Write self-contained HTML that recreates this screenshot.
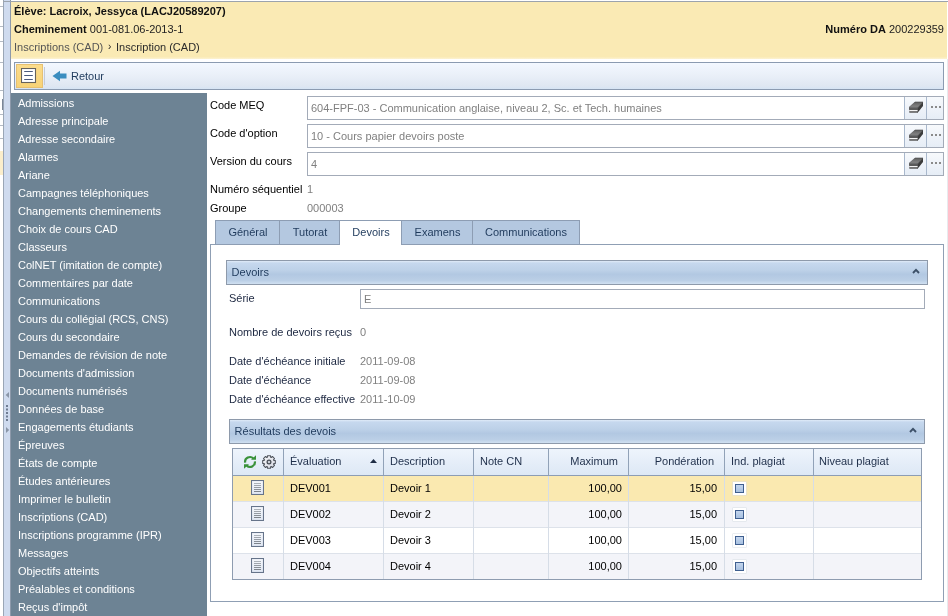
<!DOCTYPE html>
<html><head><meta charset="utf-8">
<style>
*{box-sizing:border-box;margin:0;padding:0}
html,body{width:948px;height:616px;overflow:hidden;background:#fff;font-family:"Liberation Sans",sans-serif;font-size:11px;color:#222}
.a{position:absolute}
.t{position:absolute;white-space:nowrap;line-height:18px;height:18px}
#strip{left:3px;top:0;width:8px;height:616px;background:#cfdbef;border-left:1px solid #9aa6b6;border-right:1px solid #8d99aa}
#topline{left:3px;top:1px;width:945px;height:1px;background:#9ba3ad}
#hdr{left:11px;top:2px;width:936px;height:57px;background:linear-gradient(#faeab4 0,#faeab4 96%,#fcf2d2 100%)}
#tb{left:14px;top:62px;width:930px;height:28px;border:1px solid #8b9bb1;background:linear-gradient(#f3f8ff,#e9eff8 50%,#dfe7f2 88%,#d6e4f4)}
#side{left:11px;top:93px;width:196px;height:523px;background:#6d8394}
#side .t{color:#fff;left:7px}
#main{left:207px;top:93px;width:739px;height:523px;background:#fff}
.lbl{color:#000}
.inp{position:absolute;height:24px;border:1px solid #a3abb8;background:#fff;color:#808080;line-height:22px;padding-left:3px;white-space:nowrap}
.btn{position:absolute;top:0;height:22px;border-left:1px solid #a9b8cc;background:linear-gradient(#f7f9fc,#e6edf6)}
.tab{position:absolute;top:220px;height:25px;border:1px solid #8d9db3;border-right:none;background:#b4c8e0;color:#1f3a5c;text-align:center;line-height:23px}
.hbar{position:absolute;white-space:nowrap;height:25px;border:1px solid #8e9aab;background:linear-gradient(#e0ebf8 0,#c6d8ee 9%,#bdd1e8 40%,#b2c8e2 58%,#bbcfe6 85%,#d0e0f1 100%);color:#1f3a5c;line-height:23px;padding-left:4.6px}
.val{color:#808080}
.dl{color:#1c2740}
.gh{color:#1f2f4a}
.gc{color:#000}
</style></head><body><div style="position:absolute;left:0;top:0;width:948px;height:616px;will-change:transform">
<div class="a" style="left:0;top:0;width:3px;height:616px;background:#fff"></div>
<div id="strip" class="a"></div>
<div id="topline" class="a"></div>
<div class="a" style="left:947px;top:59px;width:1px;height:557px;background:#e8eaee"></div>
<div class="a" style="left:0;top:6px;width:3px;height:1px;background:#b4bac4"></div><div class="a" style="left:0;top:26px;width:3px;height:1px;background:#b4bac4"></div><div class="a" style="left:0;top:41px;width:3px;height:1px;background:#b4bac4"></div><div class="a" style="left:0;top:62px;width:3px;height:1px;background:#b4bac4"></div><div class="a" style="left:0;top:90px;width:3px;height:1px;background:#b4bac4"></div><div class="a" style="left:0;top:114px;width:3px;height:1px;background:#b4bac4"></div><div class="a" style="left:0;top:125px;width:3px;height:1px;background:#b4bac4"></div><div class="a" style="left:0;top:138px;width:3px;height:1px;background:#b4bac4"></div><div class="a" style="left:2px;top:99px;width:1px;height:11px;background:#7a8698"></div>
<div class="a" style="left:0;top:151px;width:3px;height:24px;background:#fbeecb"></div>
<svg class="a" style="left:4px;top:391px" width="6" height="44" viewBox="0 0 6 44"><path d="M5 1 L1.6 4 L5 7Z" fill="#8a96a8"/><g fill="#6f7c92"><rect x="2" y="14" width="2" height="2"/><rect x="2" y="17.5" width="2" height="2"/><rect x="2" y="21" width="2" height="2"/><rect x="2" y="24.5" width="2" height="2"/><rect x="2" y="28" width="2" height="2"/></g><path d="M2 36 L5.2 39 L2 42Z" fill="#8a96a8"/></svg>

<div id="hdr" class="a">
  <div class="t" style="left:3px;top:0px;font-weight:bold;color:#111">Élève: Lacroix, Jessyca (LACJ20589207)</div>
  <div class="t" style="left:3px;top:18px;color:#222"><b style="color:#111">Cheminement</b> 001-081.06-2013-1</div>
  <div class="t" style="right:3px;top:18px;color:#222"><b style="color:#111">Numéro DA</b> 200229359</div>
  <div class="t" style="left:3px;top:36px;color:#555">Inscriptions (CAD)</div><div class="t" style="left:97px;top:36px;color:#222;font-size:10px">›</div><div class="t" style="left:105px;top:36px;color:#2a2a2a">Inscription (CAD)</div>
</div>

<div id="tb" class="a">
  <div class="a" style="left:1px;top:1px;width:27px;height:24px;background:linear-gradient(#fbdc8c,#f8d377);border:1px solid #e7c171"></div>
  <svg class="a" style="left:6px;top:5px" width="16" height="16" viewBox="0 0 16 16"><rect x="0.5" y="0.5" width="14" height="14" fill="#fff" stroke="#65625c" stroke-width="1.1"/><path d="M3.2 3.5h8.6M3.2 7.5h8.6M3.2 11.5h8.6" stroke="#4b5a7e" stroke-width="1.1"/></svg>
  <div class="a" style="left:29px;top:4px;width:1px;height:18px;background:#c3cad6"></div>
  <svg class="a" style="left:37px;top:6.5px" width="15" height="12" viewBox="0 0 15 12"><path d="M0.5 6 L8 0.8 V3.6 H14.5 V8.6 H8 V11.2 Z" fill="#3b8dbf"/></svg>
  <div class="t" style="left:56px;top:4px;color:#1f3a5c;line-height:18px">Retour</div>
</div>
<div class="t lbl" style="left:210px;top:96px">Code MEQ</div>
<div class="t lbl" style="left:210px;top:124px">Code d'option</div>
<div class="t lbl" style="left:210px;top:152px">Version du cours</div>
<div class="inp" style="left:307px;top:96px;width:637px">604-FPF-03 - Communication anglaise, niveau 2, Sc. et Tech. humaines<div class="btn" style="left:596px;width:22px"><svg class="a" style="left:3px;top:4px" width="16" height="13" viewBox="0 0 16 13"><defs><linearGradient id="eg" x1="0" y1="0" x2="0" y2="1"><stop offset="0" stop-color="#5e5e5e"/><stop offset="1" stop-color="#8a8a8a"/></linearGradient></defs><path d="M7 1 L15 1 L10 6.4 L1 6.4 Z" fill="url(#eg)" stroke="#4a4a4a" stroke-width="0.6" stroke-linejoin="round"/><path d="M1 6.4 L10 6.4 L10 11.8 L1.3 11.8 Z" fill="#5a5a5a"/><path d="M10 6.4 L15 1 L15 5 L9.6 11.8 L10 6.4Z" fill="#3c3c3c"/><path d="M1.2 9.6 H9.6" stroke="#f4f4f4" stroke-width="1.2"/></svg></div><div class="btn" style="left:618px;width:17px"><div class="a" style="left:4px;top:9px;width:2px;height:2px;background:#8a8a8a"></div><div class="a" style="left:8px;top:9px;width:2px;height:2px;background:#8a8a8a"></div><div class="a" style="left:12px;top:9px;width:2px;height:2px;background:#8a8a8a"></div></div></div>
<div class="inp" style="left:307px;top:124px;width:637px">10 - Cours papier devoirs poste<div class="btn" style="left:596px;width:22px"><svg class="a" style="left:3px;top:4px" width="16" height="13" viewBox="0 0 16 13"><defs><linearGradient id="eg" x1="0" y1="0" x2="0" y2="1"><stop offset="0" stop-color="#5e5e5e"/><stop offset="1" stop-color="#8a8a8a"/></linearGradient></defs><path d="M7 1 L15 1 L10 6.4 L1 6.4 Z" fill="url(#eg)" stroke="#4a4a4a" stroke-width="0.6" stroke-linejoin="round"/><path d="M1 6.4 L10 6.4 L10 11.8 L1.3 11.8 Z" fill="#5a5a5a"/><path d="M10 6.4 L15 1 L15 5 L9.6 11.8 L10 6.4Z" fill="#3c3c3c"/><path d="M1.2 9.6 H9.6" stroke="#f4f4f4" stroke-width="1.2"/></svg></div><div class="btn" style="left:618px;width:17px"><div class="a" style="left:4px;top:9px;width:2px;height:2px;background:#8a8a8a"></div><div class="a" style="left:8px;top:9px;width:2px;height:2px;background:#8a8a8a"></div><div class="a" style="left:12px;top:9px;width:2px;height:2px;background:#8a8a8a"></div></div></div>
<div class="inp" style="left:307px;top:152px;width:637px">4<div class="btn" style="left:596px;width:22px"><svg class="a" style="left:3px;top:4px" width="16" height="13" viewBox="0 0 16 13"><defs><linearGradient id="eg" x1="0" y1="0" x2="0" y2="1"><stop offset="0" stop-color="#5e5e5e"/><stop offset="1" stop-color="#8a8a8a"/></linearGradient></defs><path d="M7 1 L15 1 L10 6.4 L1 6.4 Z" fill="url(#eg)" stroke="#4a4a4a" stroke-width="0.6" stroke-linejoin="round"/><path d="M1 6.4 L10 6.4 L10 11.8 L1.3 11.8 Z" fill="#5a5a5a"/><path d="M10 6.4 L15 1 L15 5 L9.6 11.8 L10 6.4Z" fill="#3c3c3c"/><path d="M1.2 9.6 H9.6" stroke="#f4f4f4" stroke-width="1.2"/></svg></div><div class="btn" style="left:618px;width:17px"><div class="a" style="left:4px;top:9px;width:2px;height:2px;background:#8a8a8a"></div><div class="a" style="left:8px;top:9px;width:2px;height:2px;background:#8a8a8a"></div><div class="a" style="left:12px;top:9px;width:2px;height:2px;background:#8a8a8a"></div></div></div>
<div class="t lbl" style="left:210px;top:180px">Numéro séquentiel</div>
<div class="t val" style="left:307px;top:180px">1</div>
<div class="t lbl" style="left:210px;top:199px">Groupe</div>
<div class="t val" style="left:307px;top:199px">000003</div>
<!-- tab panel -->
<div class="a" style="left:210px;top:244px;width:734px;height:358px;border:1px solid #8f9fb4;background:#fff"></div>
<div class="tab" style="left:215px;width:65px">Général</div>
<div class="tab" style="left:279px;width:61px">Tutorat</div>
<div class="tab" style="left:339px;width:63px;background:#fff;height:25px;border-bottom:none">Devoirs</div>
<div class="tab" style="left:401px;width:72px">Examens</div>
<div class="tab" style="left:472px;width:108px;border-right:1px solid #8d9db3">Communications</div>
<!-- devoirs section -->
<div class="hbar" style="left:226px;top:260px;width:702px">Devoirs<svg class="a" style="right:7px;top:7px" width="8" height="6" viewBox="0 0 8 6"><path d="M1 5 L4 1.8 L7 5" fill="none" stroke="#3d5068" stroke-width="1.9"/></svg></div>
<div class="t dl" style="left:229px;top:289px">Série</div>
<div class="inp" style="left:360px;top:289px;width:565px;height:20px;line-height:18px">E</div>
<div class="t dl" style="left:229px;top:323px">Nombre de devoirs reçus</div>
<div class="t val" style="left:360px;top:323px">0</div>
<div class="t dl" style="left:229px;top:352px">Date d'échéance initiale</div>
<div class="t val" style="left:360px;top:352px">2011-09-08</div>
<div class="t dl" style="left:229px;top:371px">Date d'échéance</div>
<div class="t val" style="left:360px;top:371px">2011-09-08</div>
<div class="t dl" style="left:229px;top:390px">Date d'échéance effective</div>
<div class="t val" style="left:360px;top:390px">2011-10-09</div>
<div class="hbar" style="left:229px;top:419px;width:696px">Résultats des devois<svg class="a" style="right:7px;top:7px" width="8" height="6" viewBox="0 0 8 6"><path d="M1 5 L4 1.8 L7 5" fill="none" stroke="#3d5068" stroke-width="1.9"/></svg></div>
<div id="grid" class="a" style="left:232px;top:448px;width:690px;height:132px;border:1px solid #8e9cb0;background:#fff"><div class="a" style="left:0;top:0;width:688px;height:27px;border-bottom:1px solid #8c9db4;background:linear-gradient(#eef4fc,#dde8f5)"></div>
<div class="a" style="left:0;top:27px;width:688px;height:26px;border-bottom:1px solid #dde2ea;background:#fae9b0"></div>
<div class="a" style="left:0;top:53px;width:688px;height:26px;border-bottom:1px solid #dde2ea;background:#f3f4f9"></div>
<div class="a" style="left:0;top:79px;width:688px;height:26px;border-bottom:1px solid #dde2ea;background:#ffffff"></div>
<div class="a" style="left:0;top:105px;width:688px;height:25px;background:#f3f4f9"></div>
<div class="a" style="left:50px;top:0;width:1px;height:26px;background:#91a2b8"></div>
<div class="a" style="left:50px;top:27px;width:1px;height:103px;background:#d6dde7"></div>
<div class="a" style="left:150px;top:0;width:1px;height:26px;background:#91a2b8"></div>
<div class="a" style="left:150px;top:27px;width:1px;height:103px;background:#d6dde7"></div>
<div class="a" style="left:240px;top:0;width:1px;height:26px;background:#91a2b8"></div>
<div class="a" style="left:240px;top:27px;width:1px;height:103px;background:#d6dde7"></div>
<div class="a" style="left:315px;top:0;width:1px;height:26px;background:#91a2b8"></div>
<div class="a" style="left:315px;top:27px;width:1px;height:103px;background:#d6dde7"></div>
<div class="a" style="left:395px;top:0;width:1px;height:26px;background:#91a2b8"></div>
<div class="a" style="left:395px;top:27px;width:1px;height:103px;background:#d6dde7"></div>
<div class="a" style="left:491px;top:0;width:1px;height:26px;background:#91a2b8"></div>
<div class="a" style="left:491px;top:27px;width:1px;height:103px;background:#d6dde7"></div>
<div class="a" style="left:580px;top:0;width:1px;height:26px;background:#91a2b8"></div>
<div class="a" style="left:580px;top:27px;width:1px;height:103px;background:#d6dde7"></div>
<div class="t gh" style="left:57px;top:3px;">Évaluation</div>
<div class="t gh" style="left:157px;top:3px;">Description</div>
<div class="t gh" style="left:247px;top:3px;">Note CN</div>
<div class="t gh" style="right:303px;top:3px">Maximum</div>
<div class="t gh" style="right:207px;top:3px">Pondération</div>
<div class="t gh" style="left:498px;top:3px;">Ind. plagiat</div>
<div class="t gh" style="left:586px;top:3px;">Niveau plagiat</div>
<svg class="a" style="left:137px;top:10px" width="7" height="4" viewBox="0 0 7 4"><path d="M0 4 L3.5 0 L7 4Z" fill="#1f2d45"/></svg>
<svg class="a" style="left:10px;top:6px" width="14" height="14" viewBox="0 0 14 14"><g fill="none" stroke="#3a923a" stroke-width="2.2"><path d="M2.1 7.6 A4.9 4.9 0 0 1 10.4 3.5"/><path d="M11.9 6.4 A4.9 4.9 0 0 1 3.6 10.5"/></g><g fill="#3a923a"><path d="M13 0.2 L13 4.7 L8 4.7Z"/><path d="M1 13.8 L1 9.3 L6 9.3Z"/></g></svg>
<svg class="a" style="left:29px;top:6px" width="14" height="14" viewBox="0 0 14 14"><defs><linearGradient id="gg" x1="0" y1="0" x2="1" y2="1"><stop offset="0" stop-color="#f4f5f8"/><stop offset="1" stop-color="#d6d9e2"/></linearGradient></defs><path d="M5.54,0.67 L8.46,0.67 L8.63,2.27 L9.19,2.51 L10.44,1.49 L12.51,3.56 L11.49,4.81 L11.73,5.37 L13.33,5.54 L13.33,8.46 L11.73,8.63 L11.49,9.19 L12.51,10.44 L10.44,12.51 L9.19,11.49 L8.63,11.73 L8.46,13.33 L5.54,13.33 L5.37,11.73 L4.81,11.49 L3.56,12.51 L1.49,10.44 L2.51,9.19 L2.27,8.63 L0.67,8.46 L0.67,5.54 L2.27,5.37 L2.51,4.81 L1.49,3.56 L3.56,1.49 L4.81,2.51 L5.37,2.27Z" fill="url(#gg)" stroke="#4f545c" stroke-width="1.05" stroke-linejoin="round"/><circle cx="7" cy="7" r="1.9" fill="#c9cdd5" stroke="#454a52" stroke-width="1.2"/></svg>
<svg class="a" style="left:18px;top:31px" width="13" height="15" viewBox="0 0 13 15"><defs><linearGradient id="dg" x1="0" y1="0" x2="0" y2="1"><stop offset="0" stop-color="#f6f8fc"/><stop offset="1" stop-color="#dfe7f3"/></linearGradient></defs><rect x="0.5" y="0.5" width="12" height="14" fill="url(#dg)" stroke="#66748a" stroke-width="1.1"/><g stroke-width="0.9"><path d="M3 3.5h7" stroke="#a3a9b0"/><path d="M3 5.5h7" stroke="#969ca3"/><path d="M3 7.5h7" stroke="#8a9097"/><path d="M3 9.5h7" stroke="#7d838b"/><path d="M3 11.5h7" stroke="#70777f"/></g></svg>
<div class="t gc" style="left:57px;top:30px;">DEV001</div>
<div class="t gc" style="left:157px;top:30px;">Devoir 1</div>
<div class="t gc" style="right:299px;top:30px">100,00</div>
<div class="t gc" style="right:204px;top:30px">15,00</div>
<div class="a" style="left:500px;top:33px;width:13px;height:13px;border:1px solid #fff;background:#fff;box-shadow:0 0 0 0.5px #d8dde4"><div style="margin:1px;width:9px;height:9px;border:1px solid #3f5f8f;background:linear-gradient(#c4d6ee,#a7c0e0)"></div></div>
<svg class="a" style="left:18px;top:57px" width="13" height="15" viewBox="0 0 13 15"><defs><linearGradient id="dg" x1="0" y1="0" x2="0" y2="1"><stop offset="0" stop-color="#f6f8fc"/><stop offset="1" stop-color="#dfe7f3"/></linearGradient></defs><rect x="0.5" y="0.5" width="12" height="14" fill="url(#dg)" stroke="#66748a" stroke-width="1.1"/><g stroke-width="0.9"><path d="M3 3.5h7" stroke="#a3a9b0"/><path d="M3 5.5h7" stroke="#969ca3"/><path d="M3 7.5h7" stroke="#8a9097"/><path d="M3 9.5h7" stroke="#7d838b"/><path d="M3 11.5h7" stroke="#70777f"/></g></svg>
<div class="t gc" style="left:57px;top:56px;">DEV002</div>
<div class="t gc" style="left:157px;top:56px;">Devoir 2</div>
<div class="t gc" style="right:299px;top:56px">100,00</div>
<div class="t gc" style="right:204px;top:56px">15,00</div>
<div class="a" style="left:500px;top:59px;width:13px;height:13px;border:1px solid #fff;background:#fff;box-shadow:0 0 0 0.5px #d8dde4"><div style="margin:1px;width:9px;height:9px;border:1px solid #3f5f8f;background:linear-gradient(#c4d6ee,#a7c0e0)"></div></div>
<svg class="a" style="left:18px;top:83px" width="13" height="15" viewBox="0 0 13 15"><defs><linearGradient id="dg" x1="0" y1="0" x2="0" y2="1"><stop offset="0" stop-color="#f6f8fc"/><stop offset="1" stop-color="#dfe7f3"/></linearGradient></defs><rect x="0.5" y="0.5" width="12" height="14" fill="url(#dg)" stroke="#66748a" stroke-width="1.1"/><g stroke-width="0.9"><path d="M3 3.5h7" stroke="#a3a9b0"/><path d="M3 5.5h7" stroke="#969ca3"/><path d="M3 7.5h7" stroke="#8a9097"/><path d="M3 9.5h7" stroke="#7d838b"/><path d="M3 11.5h7" stroke="#70777f"/></g></svg>
<div class="t gc" style="left:57px;top:82px;">DEV003</div>
<div class="t gc" style="left:157px;top:82px;">Devoir 3</div>
<div class="t gc" style="right:299px;top:82px">100,00</div>
<div class="t gc" style="right:204px;top:82px">15,00</div>
<div class="a" style="left:500px;top:85px;width:13px;height:13px;border:1px solid #fff;background:#fff;box-shadow:0 0 0 0.5px #d8dde4"><div style="margin:1px;width:9px;height:9px;border:1px solid #3f5f8f;background:linear-gradient(#c4d6ee,#a7c0e0)"></div></div>
<svg class="a" style="left:18px;top:109px" width="13" height="15" viewBox="0 0 13 15"><defs><linearGradient id="dg" x1="0" y1="0" x2="0" y2="1"><stop offset="0" stop-color="#f6f8fc"/><stop offset="1" stop-color="#dfe7f3"/></linearGradient></defs><rect x="0.5" y="0.5" width="12" height="14" fill="url(#dg)" stroke="#66748a" stroke-width="1.1"/><g stroke-width="0.9"><path d="M3 3.5h7" stroke="#a3a9b0"/><path d="M3 5.5h7" stroke="#969ca3"/><path d="M3 7.5h7" stroke="#8a9097"/><path d="M3 9.5h7" stroke="#7d838b"/><path d="M3 11.5h7" stroke="#70777f"/></g></svg>
<div class="t gc" style="left:57px;top:108px;">DEV004</div>
<div class="t gc" style="left:157px;top:108px;">Devoir 4</div>
<div class="t gc" style="right:299px;top:108px">100,00</div>
<div class="t gc" style="right:204px;top:108px">15,00</div>
<div class="a" style="left:500px;top:111px;width:13px;height:13px;border:1px solid #fff;background:#fff;box-shadow:0 0 0 0.5px #d8dde4"><div style="margin:1px;width:9px;height:9px;border:1px solid #3f5f8f;background:linear-gradient(#c4d6ee,#a7c0e0)"></div></div></div>

<div id="side" class="a">
  <div class="t" style="top:1px">Admissions</div>
  <div class="t" style="top:19px">Adresse principale</div>
  <div class="t" style="top:37px">Adresse secondaire</div>
  <div class="t" style="top:55px">Alarmes</div>
  <div class="t" style="top:73px">Ariane</div>
  <div class="t" style="top:91px">Campagnes téléphoniques</div>
  <div class="t" style="top:109px">Changements cheminements</div>
  <div class="t" style="top:127px">Choix de cours CAD</div>
  <div class="t" style="top:145px">Classeurs</div>
  <div class="t" style="top:163px">ColNET (imitation de compte)</div>
  <div class="t" style="top:181px">Commentaires par date</div>
  <div class="t" style="top:199px">Communications</div>
  <div class="t" style="top:217px">Cours du collégial (RCS, CNS)</div>
  <div class="t" style="top:235px">Cours du secondaire</div>
  <div class="t" style="top:253px">Demandes de révision de note</div>
  <div class="t" style="top:271px">Documents d'admission</div>
  <div class="t" style="top:289px">Documents numérisés</div>
  <div class="t" style="top:307px">Données de base</div>
  <div class="t" style="top:325px">Engagements étudiants</div>
  <div class="t" style="top:343px">Épreuves</div>
  <div class="t" style="top:361px">États de compte</div>
  <div class="t" style="top:379px">Études antérieures</div>
  <div class="t" style="top:397px">Imprimer le bulletin</div>
  <div class="t" style="top:415px">Inscriptions (CAD)</div>
  <div class="t" style="top:433px">Inscriptions programme (IPR)</div>
  <div class="t" style="top:451px">Messages</div>
  <div class="t" style="top:469px">Objectifs atteints</div>
  <div class="t" style="top:487px">Préalables et conditions</div>
  <div class="t" style="top:505px">Reçus d'impôt</div>
</div>
</div></body></html>
